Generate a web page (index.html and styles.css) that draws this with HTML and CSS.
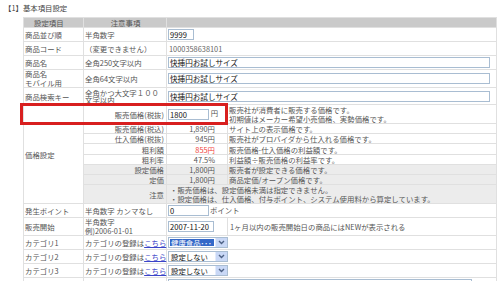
FILE: index.html
```html
<!DOCTYPE HTML>
<html>
    <head>
        <meta http-equiv="Content-Type" content="text/html; charset=UTF-8">
        <title>基本項目設定</title>
        <link rel="stylesheet" href="styles.css">
    </head>
    <body>
        <h1 class="title">【1】基本項目設定</h1>
        <div class="wrapper">
            <table class="form">
                <colgroup>
                    <col class="c-item">
                    <col class="c-note">
                    <col class="c-value">
                    <col class="c-desc">
                </colgroup>
                <tr class="head">
                    <th class="th-item">設定項目</th>
                    <th>注意事項</th>
                    <th colspan="2"></th>
                </tr>
                <tr class="row">
                    <td>商品並び順</td>
                    <td>半角数字</td>
                    <td colspan="2"><span class="field w-sort">9999</span></td>
                </tr>
                <tr class="row">
                    <td>商品コード</td>
                    <td>（変更できません）</td>
                    <td colspan="2" class="plain">1000358638101</td>
                </tr>
                <tr class="row">
                    <td>商品名</td>
                    <td>全角250文字以内</td>
                    <td colspan="2"><span class="field w-long">快挿円お試しサイズ</span></td>
                </tr>
                <tr class="tall">
                    <td class="multi">商品名<br>モバイル用</td>
                    <td>全角64文字以内</td>
                    <td colspan="2"><span class="field w-long">快挿円お試しサイズ</span></td>
                </tr>
                <tr class="tall2">
                    <td>商品検索キー</td>
                    <td class="multi tight">全角かつ大文字１００文字以内</td>
                    <td colspan="2"><span class="field w-long">快挿円お試しサイズ</span></td>
                </tr>
                <tr class="price-top">
                    <td rowspan="8" class="group">価格設定</td>
                    <td class="lbl">販売価格(税抜)</td>
                    <td class="val"><span class="field w-price">1800</span> 円</td>
                    <td class="multi wide">販売社が消費者に販売する価格です。<br>初期値はメーカー希望小売価格、実勢価格です。</td>
                </tr>
                <tr class="price">
                    <td class="lbl">販売価格(税込)</td>
                    <td class="val">1,890円</td>
                    <td>サイト上の表示価格です。</td>
                </tr>
                <tr class="price">
                    <td class="lbl">仕入価格(税抜)</td>
                    <td class="val">945円</td>
                    <td>販売社がプロバイダから仕入れる価格です。</td>
                </tr>
                <tr class="price price-10">
                    <td class="lbl">粗利額</td>
                    <td class="val red">855円</td>
                    <td>販売価格-仕入価格の利益額です。</td>
                </tr>
                <tr class="price">
                    <td class="lbl">粗利率</td>
                    <td class="val">47.5%</td>
                    <td>利益額÷販売価格の利益率です。</td>
                </tr>
                <tr class="price shade">
                    <td class="lbl">設定価格</td>
                    <td class="val">1,800円</td>
                    <td>販売者が設定できる価格です。</td>
                </tr>
                <tr class="price shade">
                    <td class="lbl">定価</td>
                    <td class="val">1,800円</td>
                    <td>商品定価/オープン価格です。</td>
                </tr>
                <tr class="price-note shade">
                    <td class="lbl">注意</td>
                    <td colspan="2" class="multi wide notes">・販売価格は、設定価格未満は指定できません。<br>・設定価格は、仕入価格、付与ポイント、システム使用料から算定しています。</td>
                </tr>
                <tr class="row">
                    <td>発生ポイント</td>
                    <td>半角数字 カンマなし</td>
                    <td colspan="2"><span class="field w-price">0</span><span class="unit">ポイント</span></td>
                </tr>
                <tr class="tall">
                    <td>販売開始</td>
                    <td class="multi">半角数字<br>例)2006-01-01</td>
                    <td><span class="field w-date">2007-11-20</span></td>
                    <td class="desc">1ヶ月以内の販売開始日の商品にはNEWが表示される</td>
                </tr>
                <tr class="row">
                    <td>カテゴリ1</td>
                    <td>カテゴリの登録は<a href="#">こちら</a></td>
                    <td colspan="2">
                        <span class="select"><span class="sel-text chosen">健康食品･･･</span><span class="sel-btn"><svg width="7" height="5" viewBox="0 0 7 5"><polyline points="1,1 3.5,3.5 6,1" fill="none" stroke="#4d6185" stroke-width="1.4"/></svg></span></span>
                    </td>
                </tr>
                <tr class="row">
                    <td>カテゴリ2</td>
                    <td>カテゴリの登録は<a href="#">こちら</a></td>
                    <td colspan="2">
                        <span class="select"><span class="sel-text">設定しない</span><span class="sel-btn"><svg width="7" height="5" viewBox="0 0 7 5"><polyline points="1,1 3.5,3.5 6,1" fill="none" stroke="#4d6185" stroke-width="1.4"/></svg></span></span>
                    </td>
                </tr>
                <tr class="row">
                    <td>カテゴリ3</td>
                    <td>カテゴリの登録は<a href="#">こちら</a></td>
                    <td colspan="2">
                        <span class="select"><span class="sel-text">設定しない</span><span class="sel-btn"><svg width="7" height="5" viewBox="0 0 7 5"><polyline points="1,1 3.5,3.5 6,1" fill="none" stroke="#4d6185" stroke-width="1.4"/></svg></span></span>
                    </td>
                </tr>
                <tr class="row last">
                    <td></td>
                    <td></td>
                    <td colspan="2"><div class="area"><span class="area-bar"></span></div></td>
                </tr>
            </table>
            <div class="callout"></div>
        </div>
    </body>
</html>
```

FILE: styles.css
```css
body {
    margin: 0;
    font-family: "Noto Sans CJK JP", "Noto Sans", sans-serif;
    font-size: 7.4px;
    color: #555;
    background: #fff;
}

.title {
    margin: 3px 0 4px 4px;
    font-size: 7.4px;
    font-weight: normal;
    line-height: 10px;
    color: #444;
}

.wrapper {
    position: relative;
    margin-left: 23px;
    width: 474px;
}

.form {
    width: 474px;
    table-layout: fixed;
    border-collapse: separate;
    border-spacing: 1px;
    background: #e0e0e0;
}

.c-item { width: 59px; }
.c-note { width: 82px; }
.c-value { width: 60px; }

.form td,
.form th {
    background: #fff;
    padding: 0 0 0 1px;
    line-height: 9px;
    vertical-align: middle;
    white-space: nowrap;
}

.form th {
    background: #cacaca;
    font-weight: normal;
    color: #555;
}
.form th.th-item {
    text-align: left;
    padding-left: 10px;
}

.head { height: 9px; }
.row { height: 13px; }
.tall { height: 17px; }
.tall2 { height: 16px; }
.price-top { height: 18px; }
.price { height: 9px; }
.price-10 { height: 10px; }
.price-note { height: 18px; }

.form td.multi {
    line-height: 8.5px;
    white-space: normal;
}
.form td.wide {
    line-height: 9px;
}
.form td.tight {
    line-height: 7.5px;
}

.form td.plain {
    color: #666;
    padding-left: 2px;
}

.form td.lbl {
    text-align: right;
    padding-right: 2px;
}
.form td.val {
    text-align: right;
    padding-right: 12px;
}
.form td.desc {
    padding-left: 2px;
}
.red { color: #f0443a; }

.shade td.lbl,
.shade td.val,
.shade td:last-child {
    background: #ececec;
}
.shade td.notes {
    padding-left: 3px;
}

.field {
    display: inline-block;
    box-sizing: border-box;
    height: 11px;
    border: 1px solid #a9bdd2;
    background: #fff;
    color: #111;
    font-size: 7.6px;
    line-height: 9px;
    padding-left: 1px;
    vertical-align: middle;
    text-align: left;
}
.w-sort { width: 26px; }
.w-long { width: 322px; }
.w-price { width: 41px; }
.w-date { width: 46px; }

.unit {
    margin-left: 1px;
}

.select {
    display: inline-flex;
    box-sizing: border-box;
    width: 60px;
    height: 11px;
    border: 1px solid #a9bdd2;
    background: #fff;
    vertical-align: middle;
    color: #111;
}
.sel-text {
    flex: 1;
    margin: 1px;
    padding-left: 1px;
    line-height: 7px;
    font-size: 7.4px;
    white-space: nowrap;
}
.sel-text.chosen {
    background: #3468c8;
    color: #fff;
}
.sel-btn {
    width: 11px;
    display: flex;
    align-items: center;
    justify-content: center;
    background: #c9d8f6;
    border-left: 1px solid #e3ebfb;
}

a {
    color: #3a44c8;
    text-decoration: underline;
}

.last { height: 6px; }
.area {
    position: relative;
    width: 302px;
    height: 10px;
    margin-top: 1px;
    border: 1px solid #a9bdd2;
    border-bottom: none;
}
.area-bar {
    position: absolute;
    right: 1px;
    top: 1px;
    width: 10px;
    height: 9px;
    background: #ececec;
}

.callout {
    position: absolute;
    left: -3px;
    top: 86px;
    width: 208px;
    height: 22px;
    box-sizing: border-box;
    border: 3px solid #d81f1f;
}
```
